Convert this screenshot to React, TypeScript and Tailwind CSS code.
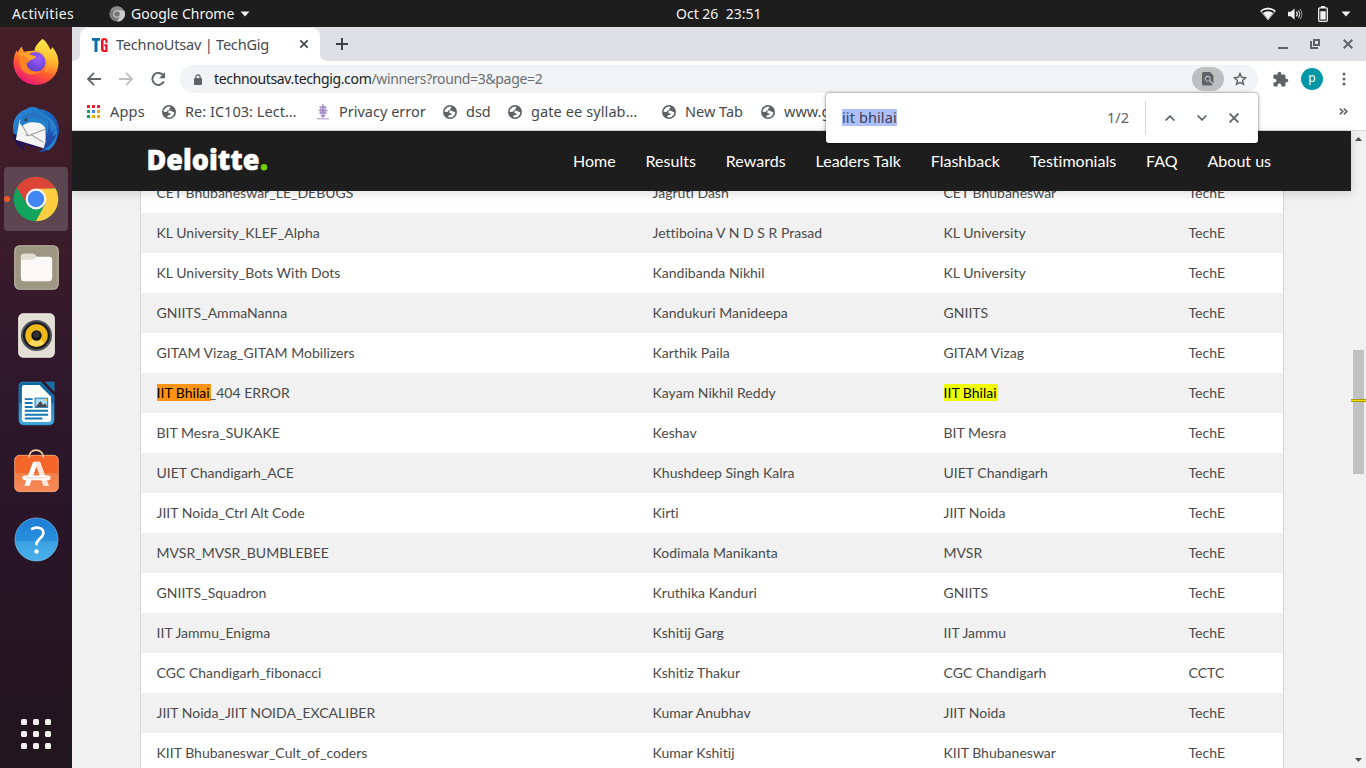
import React from "react";

const ui = "font-['Noto_Sans',sans-serif]";

const rows: [string, string, string, string][] = [
  ["CET Bhubaneswar_LE_DEBUGS", "Jagruti Dash", "CET Bhubaneswar", "TechE"],
  ["KL University_KLEF_Alpha", "Jettiboina V N D S R Prasad", "KL University", "TechE"],
  ["KL University_Bots With Dots", "Kandibanda Nikhil", "KL University", "TechE"],
  ["GNIITS_AmmaNanna", "Kandukuri Manideepa", "GNIITS", "TechE"],
  ["GITAM Vizag_GITAM Mobilizers", "Karthik Paila", "GITAM Vizag", "TechE"],
  ["IIT Bhilai_404 ERROR", "Kayam Nikhil Reddy", "IIT Bhilai", "TechE"],
  ["BIT Mesra_SUKAKE", "Keshav", "BIT Mesra", "TechE"],
  ["UIET Chandigarh_ACE", "Khushdeep Singh Kalra", "UIET Chandigarh", "TechE"],
  ["JIIT Noida_Ctrl Alt Code", "Kirti", "JIIT Noida", "TechE"],
  ["MVSR_MVSR_BUMBLEBEE", "Kodimala Manikanta", "MVSR", "TechE"],
  ["GNIITS_Squadron", "Kruthika Kanduri", "GNIITS", "TechE"],
  ["IIT Jammu_Enigma", "Kshitij Garg", "IIT Jammu", "TechE"],
  ["CGC Chandigarh_fibonacci", "Kshitiz Thakur", "CGC Chandigarh", "CCTC"],
  ["JIIT Noida_JIIT NOIDA_EXCALIBER", "Kumar Anubhav", "JIIT Noida", "TechE"],
  ["KIIT Bhubaneswar_Cult_of_coders", "Kumar Kshitij", "KIIT Bhubaneswar", "TechE"],
];

function Match({ text, mark }: { text: string; mark: string }) {
  const term = "IIT Bhilai";
  if (!text.startsWith(term)) return <>{text}</>;
  return (
    <>
      <span className={mark}>{term}</span>
      {text.slice(term.length)}
    </>
  );
}

function TopBar() {
  return (
    <div className={`${ui} relative flex h-[27px] shrink-0 items-center bg-[#1d1d1d] text-sm leading-none text-[#f2f2f2]`}>
      <span className="ml-3 w-[97px] tracking-[0.38px]">Activities</span>
      <svg width="16" height="16" viewBox="0 0 16 16">
        <circle cx="8" cy="8" r="7.6" fill="#7b7b7b" />
        <path d="M8 4.2h7A7.6 7.6 0 0 1 8 15.6l3.4-5.8z" fill="#c9c9c9" />
        <path d="M1.3 4.2A7.6 7.6 0 0 1 14.7 4.2H8z" fill="#8c8c8c" />
        <circle cx="8" cy="8" r="3.8" fill="#d0d0d0" />
        <circle cx="8" cy="8" r="2.8" fill="#777" />
      </svg>
      <span className="ml-1.5 w-[104px] whitespace-nowrap">Google Chrome</span>
      <svg className="ml-[5px]" width="10" height="6" viewBox="0 0 10 6"><path d="M.5.5h9L5 5.5z" fill="#f2f2f2" /></svg>
      <div className="absolute inset-x-0 top-0 flex h-[27px] items-center pl-[676px] text-[14px]">
        <span className="whitespace-pre">Oct 26  23:51</span>
      </div>
      <div className="ml-auto flex items-center pr-[15px]">
        <svg width="16" height="14" viewBox="0 0 16 14">
          <path d="M.8 4.3C5 .2 11 .2 15.2 4.3L8 13z" fill="none" stroke="#b8b8b8" strokeWidth="1" />
          <path d="M.3 3.8C4.8-.2 11.2-.2 15.7 3.8l-1 1.1C11 1.7 5 1.7 1.3 4.9zM3 6c3-2.2 7-2.2 10 0l-5 6.500z" fill="#f2f2f2" />
        </svg>
        <svg className="ml-3" width="15" height="14" viewBox="0 0 16 14">
          <path d="M0 4.5h3L7 1v12L3 9.5H0z" fill="#f2f2f2" />
          <path d="M9 4.5q2 2.5 0 5" stroke="#f2f2f2" strokeWidth="1.3" fill="none" />
          <path d="M11 3q3 4 0 8" stroke="#c8c8c8" strokeWidth="1.2" fill="none" />
          <path d="M13 1.5q3.6 5.5 0 11" stroke="#8c8c8c" strokeWidth="1.1" fill="none" />
        </svg>
        <svg className="ml-[15px]" width="10" height="16" viewBox="0 0 10 16">
          <path d="M3 0h4v2H3z" fill="#f2f2f2" />
          <rect x=".7" y="1.9" width="8.6" height="13.4" rx="1" fill="none" stroke="#f2f2f2" strokeWidth="1.3" />
          <path d="M2.3 5.2h5.4v8.4H2.3z" fill="#f2f2f2" />
        </svg>
        <svg className="ml-[13px]" width="10" height="6" viewBox="0 0 10 6"><path d="M.5.5h9L5 5.5z" fill="#f2f2f2" /></svg>
      </div>
    </div>
  );
}

function Firefox() {
  return (
    <svg width="48" height="48" viewBox="0 1 48 48">
      <defs>
        <linearGradient id="ff1" x1=".8" y1=".05" x2=".3" y2="1">
          <stop offset="0" stopColor="#fff04a" /><stop offset=".35" stopColor="#ffb02a" /><stop offset=".65" stopColor="#ff5a32" /><stop offset="1" stopColor="#e5127c" />
        </linearGradient>
        <radialGradient id="ff2" cx=".65" cy=".3" r=".8"><stop offset="0" stopColor="#9b5cff" /><stop offset="1" stopColor="#5b3bc4" /></radialGradient>
        <linearGradient id="ff3" x1="0" y1="0" x2="0" y2="1"><stop offset="0" stopColor="#ffe94a" /><stop offset=".5" stopColor="#ffc636" /><stop offset="1" stopColor="#ff8a28" /></linearGradient>
      </defs>
      <path d="M30.500 1C35 4 37 9 38 11.500c1 .5 2-1 2-2.500 4 4 6.500 10 6.500 16a22.500 22 0 0 1-45 0c0-6 1.500-9.500 3.500-13 0 1 .5 2 1 2.200C7 12 8 10 10 8.500c0 2 1 4 2.500 5.300 2-.8 4-1 6-.8l5-.5C24 8 27 4 30.500 1z" fill="url(#ff1)" />
      <circle cx="23.500" cy="24" r="10" fill="url(#ff2)" />
      <path d="M30.500 1c5 4 6.500 8.500 9 12.500 4 8 0 18-8 22 6-8 4-17-2-21.500l-7-1.800C23 8 27 4 30.500 1z" fill="url(#ff3)" />
      <path d="M5 15.500c5-3 9-1 12 .5 2 1.500 5 2 7 2 0 2-3 3-5 4-2 .8-2 3-4.500 3.500C15 32 22 35 29 33c-6 6-18 4-21-5-1-5 0-9-3-12.500z" fill="#ff8226" />
      <path d="M5 16c4-2 8-1 12 0 2 1.500 5 2 7 2 0 2-3 3-5 4-3 .3-4-3-7-4-2-.700-5-2-7-2z" fill="#ffa52d" />
    </svg>
  );
}

function Thunderbird() {
  return (
    <svg width="48" height="48" viewBox="0 1 50 50">
      <defs><linearGradient id="tb" x1="0" y1="0" x2="1" y2="1"><stop offset="0" stopColor="#3291dc" /><stop offset=".5" stopColor="#1b66bd" /><stop offset="1" stopColor="#28349a" /></linearGradient></defs>
      <path d="M15 3C20-.5 25 1 28 3c15 1 23 14 20.500 27C46 42 36 49 27 48c3-1 5-3 6-5L4 35C-3 20 3 7 15 3z" fill="url(#tb)" />
      <path d="M1 29C2 40 9 44 14 46c-2-2-3-4-2-6 8 3 17 5 22 2l-4-10-20-2z" fill="#251451" />
      <path d="m8 14-4 21 29 9 2-7V25C35 16 24 12 17 14c-4 1-4 4-6 4z" fill="#f4f4f5" />
      <path d="m8 16 9 15 18-7M17 31l-3-1M20 30l13 8" fill="none" stroke="#8b8b8b" strokeWidth="1" />
      <path d="M8 18C11 5 19 1 26 4c11 4 14 13 11 25-2-9-7-12-15-12-6 0-9 2-11 4z" fill="#2480cb" />
      <path d="M12 11C20 3 31 6 37 17c-7-5-13-6-20-4-3 1-4 3-6 5z" fill="#2a6ab9" opacity=".55" />
      <path d="M31 8c7 4 10 10 9 20l4-4-2 8 4-3c-2 7-6 12-12 16l4 1c6-4 9-10 9-17C48 18 40 11 31 8z" fill="#2681c9" />
      <circle cx="14.500" cy="14.500" r="1.500" fill="#3a3d3b" />
    </svg>
  );
}

function Chrome() {
  return (
    <svg width="46" height="46" viewBox="-23 -23 46 46">
      <circle r="22.300" fill="#12a35c" />
      <path d="M-19.300-11.100A22.300 22.300 0 0 1 19.300-11.100L9-10H0L-9.500 3z" fill="#db4437" />
      <path d="M0-10.500h19.600A22.300 22.300 0 0 1-.3 22.300L9.300 5z" fill="#ffcd40" />
      <path d="M-19-11.500-9.300 5H0v-15.500h19.600" fill="#db4437" />
      <path d="M-19-11-9 6 0 10h6L-.5 22.300A22.300 22.300 0 0 1-19-11z" fill="#12a35c" />
      <circle r="10.400" fill="#f5f5f5" /><circle r="8.200" fill="#4285f4" />
    </svg>
  );
}

function Files() {
  return (
    <svg width="45" height="45" viewBox="0 0 46 46">
      <rect x=".8" y=".8" width="44.400" height="44.400" rx="5" fill="#9d9682" stroke="#beb8a7" strokeWidth="1.200" />
      <path d="M7 12q0-3 3-3h9q2 0 4 3h13q3 0 3 3v18q0 4-3 4H10q-3 0-3-4z" fill="#faf9f8" />
      <path d="M7 15v-3q0-3 3-3h9q2 0 4 3-2 3-4 3z" fill="#e2ded4" />
    </svg>
  );
}

function Rhythmbox() {
  return (
    <svg width="37" height="45" viewBox="0 0 38 46">
      <rect x=".7" y=".7" width="36.600" height="44.600" rx="4.500" fill="#e3dfd4" stroke="#f0ede4" />
      <circle cx="19" cy="23" r="16" fill="#56565d" /><circle cx="19" cy="23" r="14" fill="#1e1e28" />
      <circle cx="19" cy="23" r="11.500" fill="#efb91a" />
      <path d="M11 31a11.500 11.500 0 0 0 16 0l-6-6h-4z" fill="#ffd95a" />
      <circle cx="19" cy="23" r="5.300" fill="#17171b" /><circle cx="19" cy="22" r="3" fill="#343438" />
    </svg>
  );
}

function Writer() {
  return (
    <svg width="37" height="45" viewBox="0 0 38 46">
      <defs><linearGradient id="wr" x1="0" y1="0" x2="0" y2="1"><stop offset=".5" stopColor="#0d669d" /><stop offset=".5" stopColor="#2f89bd" /><stop offset="1" stopColor="#42a9df" /></linearGradient></defs>
      <path d="M5 1h18.500L37 15v25q0 5-5 5H6q-5 0-5-5V6q0-5 4-5z" fill="url(#wr)" stroke="#2c91c6" strokeWidth=".7" />
      <path d="M6 4h16l12 12v23q0 3-3 3H7q-3 0-3-3V7q0-3 2-3z" fill="#fff" />
      <path d="M28 .8h9.200v9.500z" fill="#146ea5" stroke="#3089b9" strokeWidth=".5" />
      <path d="M7 18.500h8M7 22.500h8M7 26.500h8M7 30.500h24M7 34.500h24M7 38.500h18" stroke="#1477b2" strokeWidth="2" />
      <path d="M17 17h14v10.500H17z" fill="#1477b2" /><path d="M18 18h12v8.500H18z" fill="#a8dbfa" />
      <path d="m18 26.500 5-6 3 4 2-2 2 4z" fill="#4a4d4e" /><path d="M27 18h3v3z" fill="#fbc51e" />
    </svg>
  );
}

function Software() {
  return (
    <svg width="45" height="45" viewBox="0 2 46 46">
      <defs><linearGradient id="sw" x1="0" y1="0" x2="0" y2="1"><stop offset=".5" stopColor="#f4652a" /><stop offset=".5" stopColor="#f37d47" /><stop offset="1" stopColor="#f68b59" /></linearGradient></defs>
      <rect x=".8" y="8.500" width="44.400" height="37" rx="4.500" fill="url(#sw)" stroke="#f4a075" />
      <path d="M15.500 11C14.500.5 30.500.5 30 11" fill="none" stroke="#f3d1a0" strokeWidth="1.700" />
      <path d="M13 39.500h-2.500l9-24.500h7l9 24.500h-5.300L23 20l-7.200 19.500z" fill="#fff" />
      <path d="M23 15h3.500l9 24.500h-5.300L23 20z" fill="#fde4d8" />
      <rect x="8.500" y="29" width="29" height="5" rx="2.500" fill="#fff" />
      <path d="M11 31.500h24" stroke="#f9cdbb" strokeWidth="1" />
    </svg>
  );
}

function Help() {
  return (
    <svg width="45" height="45" viewBox="0 0 46 46">
      <defs><linearGradient id="hp" x1="0" y1="0" x2="0" y2="1"><stop offset="0" stopColor="#1e7dd4" /><stop offset=".54" stopColor="#2791df" /><stop offset=".54" stopColor="#3ba0e3" /><stop offset="1" stopColor="#4bb1ec" /></linearGradient></defs>
      <circle cx="23" cy="23" r="22" fill="url(#hp)" stroke="#79c0ed" strokeWidth=".7" />
      <path d="M17.500 12.500c6-3 12.500-1.500 12.500 3.500 0 6-7 6-7 12v1" fill="none" stroke="#fff" strokeWidth="2.700" />
      <circle cx="23" cy="35.200" r="2.300" fill="#fff" />
    </svg>
  );
}

function Dock() {
  const apps = [Firefox, Thunderbird, Chrome, Files, Rhythmbox, Writer, Software, Help];
  return (
    <div className="flex w-[72px] shrink-0 flex-col items-center gap-1 bg-[linear-gradient(180deg,#451f27_0%,#3b1c29_28%,#2f172c_48%,#291527_70%,#21151c_100%)] pt-1">
      {apps.map((Icon, i) => (
        <div key={i} className={i === 2 ? "relative flex size-16 items-center justify-center rounded-[4px] bg-[#5d4650]" : "flex size-16 items-center justify-center"}>
          {i === 2 && <span className="absolute top-[29px] left-0 size-1.5 rounded-full bg-[#ef5a29]" />}
          <Icon />
        </div>
      ))}
      <div className="mt-auto mb-[19px] grid grid-cols-3 gap-1.5">
        {Array.from({ length: 9 }, (_, i) => <span key={i} className="size-1.5 rounded-[1.5px] bg-[#f0efec]" />)}
      </div>
    </div>
  );
}

function TabStrip() {
  return (
    <div className="flex h-[34px] shrink-0 items-end bg-[#dee0e5] text-[#5f6368]">
      <svg width="8" height="8" viewBox="0 0 8 8"><path d="M8 0v8H0Q8 8 8 0z" fill="#fff" /></svg>
      <div className="flex h-[33px] w-60 items-center rounded-t-lg bg-white pl-3">
        <svg width="16" height="16" viewBox="0 0 16 16">
          <path d="M0 1h8v2.700H5.500V15h-3V3.700H0z" fill="#0b6ea8" />
          <path d="M15.500 6V4Q15.500 1 12.200 1T9 4v8q0 3 3 3h3.500V7.300h-3.200v2h1V13h-.8q-1 0-1-1V4.300q0-1.200 1-1.200t1 1.200V6z" fill="#ee1020" />
        </svg>
        <span className="ml-2 w-[183px] pb-px text-[14.500px] leading-none tracking-[-0.19px] whitespace-nowrap text-[#45494d]">TechnoUtsav | TechGig</span>
        <svg className="-mt-px" width="10" height="10" viewBox="0 0 10 10"><path d="m1.300 1.300 7.400 7.400m0-7.400L1.300 8.700" stroke="#45494d" strokeWidth="1.700" /></svg>
      </div>
      <svg width="8" height="8" viewBox="0 0 8 8"><path d="M0 0v8h8Q0 8 0 0z" fill="#fff" /></svg>
      <div className="flex h-[34px] flex-1 items-center">
        <svg className="ml-2" width="12" height="12" viewBox="0 0 12 12"><path d="M6 0v12M0 6h12" stroke="#3c4043" strokeWidth="1.900" /></svg>
        <svg className="ml-auto" width="10" height="10" viewBox="0 0 10 10"><path d="M0 9h10" stroke="#5f6368" strokeWidth="2" /></svg>
        <svg className="ml-[22px]" width="10" height="10" viewBox="0 0 10 10"><path d="M4 1h5v5H4z" fill="none" stroke="#5f6368" strokeWidth="2" /><path d="M1 2v7h7" fill="none" stroke="#5f6368" strokeWidth="2" /></svg>
        <svg className="mr-[13px] ml-[23px]" width="10" height="10" viewBox="0 0 10 10"><path d="m.7.7 8.600 8.600m0-8.600L.7 9.300" stroke="#5f6368" strokeWidth="2" /></svg>
      </div>
    </div>
  );
}

function Toolbar() {
  return (
    <div className="flex h-9 shrink-0 items-center bg-white">
      <svg className="ml-[15px]" width="14" height="14" viewBox="0 0 14 14"><path d="M14 7H1.300M7 .8.9 7 7 13.200" fill="none" stroke="#5f6368" strokeWidth="1.800" /></svg>
      <svg className="ml-[18px]" width="14" height="14" viewBox="0 0 14 14"><path d="M0 7h12.700M7 .8 13.100 7 7 13.200" fill="none" stroke="#bdbfc1" strokeWidth="1.800" /></svg>
      <svg className="ml-[18px]" width="15" height="14" viewBox="0 0 15 14"><path d="M12.500 3.800A6 6 0 1 0 12.800 9.500" fill="none" stroke="#5f6368" strokeWidth="1.900" /><path d="M14 .3v6H8z" fill="#5f6368" /></svg>
      <div className="ml-3.5 flex h-7 w-[1078px] shrink-0 items-center rounded-full bg-[#f1f3f4]">
        <svg className="ml-[14px]" width="8" height="11" viewBox="0 0 8 11"><path d="M1.900 5V3a2.100 2.100 0 0 1 4.200 0v2" fill="none" stroke="#5f6368" strokeWidth="1.200" /><rect y="4" width="8" height="7" rx=".8" fill="#5f6368" /></svg>
        <span className="ml-3 flex-1 text-[14px] leading-none tracking-[-0.34px] whitespace-nowrap text-[#6b6f73]"><span className="text-[#202124]">technoutsav.techgig.com</span>/winners?round=3&amp;page=2</span>
        <span className="flex h-6 w-8 items-center justify-center rounded-full bg-[#bebfc0]">
          <svg width="12" height="14" viewBox="0 0 12 14"><path d="M1.500 0H8l3.500 3.500v8L8.300 8.300a3 3 0 1 0-1 1l3.500 3.500q-.4.700-1.300.7h-8Q0 13.500 0 12V1.500Q0 0 1.500 0z" fill="#5f6368" /><circle cx="5.800" cy="6.900" r="1.900" fill="#5f6368" /></svg>
        </span>
        <svg className="mr-[11px] ml-[9px]" width="14" height="14" viewBox="0 0 14 14"><path d="m7 1.500 1.600 3.800 4 .4-3 2.700.9 4L7 10.300l-3.500 2.100.9-4-3-2.700 4-.4z" fill="none" stroke="#5f6368" strokeWidth="1.400" /></svg>
      </div>
      <svg className="ml-[14px]" width="17" height="17" viewBox="0 0 24 24"><path fill="#5f6368" d="M20.500 11H19V7c0-1.100-.9-2-2-2h-4V3.500a2.500 2.500 0 0 0-5 0V5H4c-1.100 0-2 .9-2 2v3.800h1.500a2.700 2.700 0 0 1 0 5.400H2V20c0 1.100.9 2 2 2h3.800v-1.500a2.700 2.700 0 0 1 5.400 0V22H17c1.100 0 2-.9 2-2v-4h1.500a2.500 2.500 0 0 0 0-5z" /></svg>
      <span className="ml-3 flex size-[22px] shrink-0 items-center justify-center rounded-full bg-[#0097a7] pb-0.5 text-[12px] leading-none text-white">p</span>
      <svg className="ml-[19px]" width="4" height="14" viewBox="0 0 4 14"><circle cx="2" cy="2" r="1.500" fill="#5f6368" /><circle cx="2" cy="7" r="1.500" fill="#5f6368" /><circle cx="2" cy="12" r="1.500" fill="#5f6368" /></svg>
    </div>
  );
}

function Globe() {
  return (
    <svg className="shrink-0" width="14" height="14" viewBox="0 0 14 14">
      <circle cx="7" cy="7" r="7" fill="#5f6368" />
      <path d="M7.600 1.500 4.500 2.200 1.800 5l-.2 1.800 3 .2.8-1.400 2-.4-.2-1.600 1.400-.8z" fill="#fff" />
      <path d="m6.400 6.300 2-.8 1.600 1.100 2.300.6-.5 2.400-2.200 2.400-3.400.5L5 11.200l1.400-1 2.200-.4-.2-1.400-2-.4z" fill="#fff" />
    </svg>
  );
}

function Bookmarks() {
  const sites = [
    { t: "Re: IC103: Lect…", w: "w-[154px]", f: "tracking-[0.03px]" },
    { t: "Privacy error", w: "w-[127px]", f: "", tree: true },
    { t: "dsd", w: "w-[65px]", f: "" },
    { t: "gate ee syllab…", w: "w-[154px]", f: "tracking-[0.1px]" },
    { t: "New Tab", w: "w-[99px]", f: "" },
    { t: "www.gate", w: "w-[65px] overflow-hidden", f: "py-1" },
  ];
  const dots = ["bg-[#ea1f38]", "bg-[#ea1f38]", "bg-[#ea1f38]", "bg-[#12a35c]", "bg-[#4285f4]", "bg-[#f5a800]", "bg-[#12a35c]", "bg-[#f5a800]", "bg-[#f5a800]"];
  return (
    <div className="flex h-[34px] shrink-0 items-center border-b border-[#d8dade] bg-white pb-1 pl-[15px] text-[14.500px] leading-none text-[#45494d]">
      <div className="flex w-[75px] items-center">
        <div className="grid grid-cols-3 gap-0.5">{dots.map((d, i) => <span key={i} className={`size-[3px] ${d}`} />)}</div>
        <span className="ml-[10px] tracking-[0.2px]">Apps</span>
      </div>
      {sites.map((s) => (
        <div key={s.t} className={`flex shrink-0 items-center whitespace-nowrap ${s.w}`}>
          {s.tree ? (
            <svg width="14" height="16" viewBox="0 0 14 16"><path d="M7 0v14M3.500 3.500 7 2l3.500 1.500M2.500 6.500h9M3.500 9h7M5 11l2 2 2-2" stroke="#a58cc5" strokeWidth="1.300" fill="none" /><path d="M4 3h6v7H4z" fill="#a88fc6" opacity=".7" /><path d="M1 14.800h12" stroke="#c9badd" strokeWidth="1.600" /></svg>
          ) : <Globe />}
          <span className={`ml-[9px] ${s.f}`}>{s.t}</span>
        </div>
      ))}
      <svg className="mr-[18px] ml-auto" width="9" height="7" viewBox="0 0 9 7"><path d="m.8.6 3 2.900-3 2.900M4.800.6l3 2.900-3 2.900" fill="none" stroke="#5f6368" strokeWidth="1.600" /></svg>
    </div>
  );
}

function FindBar() {
  return (
    <div className="absolute top-[93px] left-[826px] z-20 flex h-[50px] w-[432px] items-center rounded-[3px] bg-white text-[14.500px] leading-none text-[#5f6368] shadow-[0_0_2px_rgba(0,0,0,.55),0_1px_5px_rgba(0,0,0,.25)]">
      <span className="mb-px ml-4 flex h-[17px] w-[55px] items-center bg-[#adc0fb] pb-px tracking-[0.1px] whitespace-nowrap text-[#3c3f55]">iit bhilai</span>
      <span className="mb-px ml-auto w-[38px]">1/2</span>
      <span className="h-[34px] w-px bg-[#d5d7da]" />
      <svg className="ml-[19px]" width="10" height="6" viewBox="0 0 10 6"><path d="m.6 5.500 4.400-4.400 4.400 4.400" fill="none" stroke="#5f6368" strokeWidth="1.700" /></svg>
      <svg className="ml-[22px]" width="10" height="6" viewBox="0 0 10 6"><path d="m.6.5 4.400 4.400L9.400.5" fill="none" stroke="#5f6368" strokeWidth="1.700" /></svg>
      <svg className="mr-[19px] ml-[22px]" width="10" height="10" viewBox="0 0 10 10"><path d="m.6.6 8.800 8.800m0-8.800L.6 9.400" stroke="#5f6368" strokeWidth="1.900" /></svg>
    </div>
  );
}

function Page() {
  const nav = ["Home", "Results", "Rewards", "Leaders Talk", "Flashback", "Testimonials", "FAQ", "About us"];
  return (
    <div className="flex min-h-0 flex-1 flex-col bg-[#f1f1f1] font-['Lato',sans-serif] [font-variant-ligatures:none]">
      <header className="relative z-10 flex h-[60px] shrink-0 items-center bg-[#1d1d1d] pr-[80px] pl-[75px] shadow-[0_2px_10px_rgba(0,0,0,.15)]">
        <svg width="124" height="34" viewBox="0 0 124 34">
          <text x="-.5" y="26.300" fill="#fff" stroke="#fff" strokeWidth=".5" fontSize="29" fontWeight="900" fontFamily="Noto Sans, sans-serif" textLength="113" lengthAdjust="spacingAndGlyphs">Deloitte</text>
          <circle cx="117" cy="23.300" r="3.300" fill="#70d000" />
        </svg>
        <nav className="ml-auto flex gap-[30px] text-base leading-none whitespace-nowrap text-white">{nav.map((n) => <span key={n}>{n}</span>)}</nav>
      </header>
      <main className="min-h-0 flex-1 overflow-hidden">
        <div className="-mt-[18px] mr-[67px] ml-[68px] border-x border-[#d5d5d5]">
          {rows.map((r, i) => (
            <div key={r[0]} className={`grid h-10 grid-cols-[496px_291px_245px_1fr] items-center pl-[15.500px] text-sm tracking-[0.02px] whitespace-nowrap text-[#4a4a4a] ${i % 2 ? "bg-[#f1f1f1]" : "bg-white"}`}>
              <span><Match text={r[0]} mark="bg-[#ff9414] pr-px -mr-px text-black" /></span>
              <span>{r[1]}</span>
              <span><Match text={r[2]} mark="bg-[#f0ff00] pr-px text-black" /></span>
              <span>{r[3]}</span>
            </div>
          ))}
        </div>
      </main>
    </div>
  );
}

function Scrollbar() {
  return (
    <div className="relative flex w-[15px] shrink-0 flex-col items-center bg-[#f1f1f1]">
      <svg className="mt-[6px]" width="7" height="4" viewBox="0 0 7 4"><path d="M0 4h7L3.500 0z" fill="#505050" /></svg>
      <div className="mt-[209px] h-[124px] w-[11px] bg-[#c1c1c1]" />
      <span className="absolute top-[268px] left-0 h-[3px] w-[15px] border-y border-[#a99b00] bg-[#eadb00]" />
      <svg className="mt-auto mb-[6px]" width="7" height="4" viewBox="0 0 7 4"><path d="M0 0h7L3.500 4z" fill="#505050" /></svg>
    </div>
  );
}

export default function App() {
  return (
    <div className="relative flex h-[768px] w-[1366px] flex-col overflow-hidden">
      <TopBar />
      <div className="flex min-h-0 flex-1">
        <Dock />
        <div className={`${ui} flex min-w-0 flex-1 flex-col`}>
          <TabStrip />
          <Toolbar />
          <Bookmarks />
          <div className="flex min-h-0 flex-1"><Page /><Scrollbar /></div>
        </div>
      </div>
      <div className={ui}><FindBar /></div>
    </div>
  );
}
